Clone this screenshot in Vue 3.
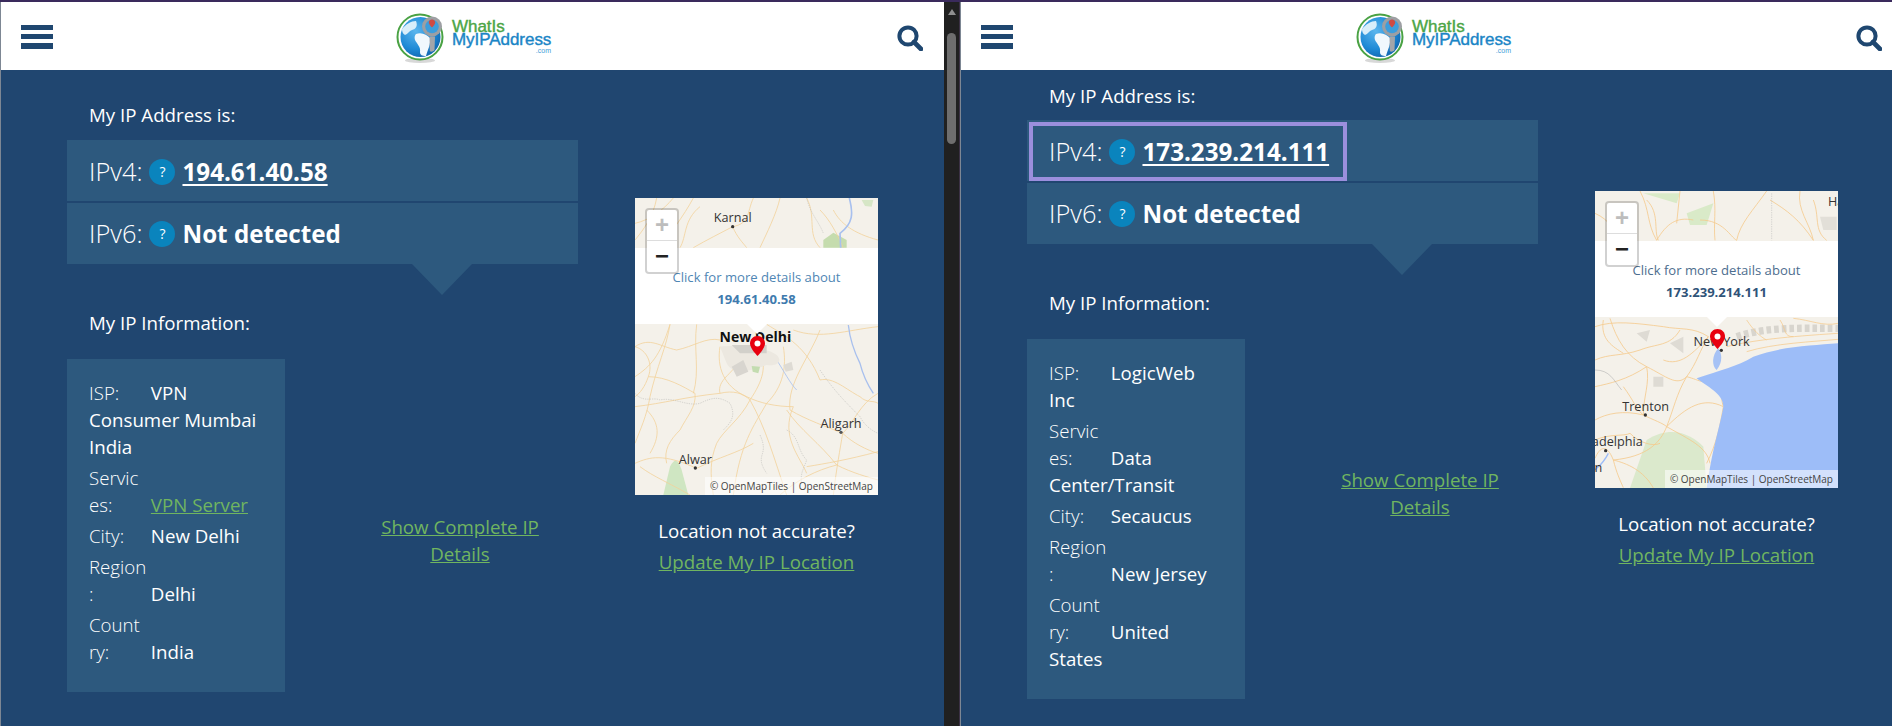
<script setup>
const panes = [
  {
    id: 'left',
    ipv4: '194.61.40.58',
    focused: false,
    info: [
      { label: 'ISP:', value: 'VPN Consumer Mumbai India' },
      { label: 'Servic\nes:', value: 'VPN Server', link: true },
      { label: 'City:', value: 'New Delhi' },
      { label: 'Region\n:', value: 'Delhi' },
      { label: 'Count\nry:', value: 'India' }
    ]
  },
  {
    id: 'right',
    ipv4: '173.239.214.111',
    focused: true,
    info: [
      { label: 'ISP:', value: 'LogicWeb Inc' },
      { label: 'Servic\nes:', value: 'Data Center/Transit' },
      { label: 'City:', value: 'Secaucus' },
      { label: 'Region\n:', value: 'New Jersey' },
      { label: 'Count\nry:', value: 'United States' }
    ]
  }
]

const delhiRoads = [
  'M110 24 C100 80 70 120 45 150', 'M220 24 C190 80 150 130 120 173', 'M338 110 C300 130 260 150 220 173',
  'M338 110 C350 140 370 160 380 173', 'M480 24 C470 70 440 130 420 173', 'M560 24 C590 80 560 130 600 173',
  'M640 60 C660 100 700 130 774 150', 'M45 470 C90 440 120 470 170 480 C220 470 260 440 300 450',
  'M150 403 C140 470 110 530 90 620 C80 680 60 720 45 760', 'M230 403 C220 480 240 540 220 610',
  'M300 470 C290 530 310 590 380 620 C420 640 470 650 520 650', 'M490 470 C500 530 490 590 440 640 C400 710 360 760 340 915',
  'M600 420 C570 500 500 580 510 660 C560 690 620 710 668 730', 'M668 730 C700 700 720 640 774 610',
  'M668 730 C660 780 650 830 640 915', 'M668 730 C700 760 740 780 774 790', 'M45 650 C130 640 200 620 300 610 C340 600 370 610 390 630',
  'M390 630 C440 720 460 800 500 915', 'M520 650 C480 740 540 800 560 850', 'M230 835 C300 800 350 790 400 760',
  'M60 830 C100 860 150 880 210 915', 'M560 830 C620 820 680 810 774 785', 'M520 420 C600 450 680 420 774 410',
  'M300 610 C290 570 340 550 350 520', 'M420 480 C440 530 430 570 390 630',
  'M45 560 C90 530 120 500 150 403', 'M45 470 C80 480 100 520 85 560 C75 590 60 610 45 620',
  'M85 560 C140 560 190 590 225 610', 'M225 610 C230 650 200 680 180 720 C150 750 130 780 140 820',
  'M390 630 C360 690 310 720 290 760 C270 810 270 850 280 915', 'M500 660 C540 720 600 760 650 825',
  'M650 825 C590 840 530 870 480 915', 'M650 825 C700 850 740 860 774 870',
  'M600 570 C640 560 680 600 720 620 C740 640 760 630 774 640', 'M45 820 C90 800 130 790 230 835',
  'M80 660 C120 700 120 740 90 790', 'M440 403 C500 440 560 470 600 570', 'M45 100 C90 90 130 60 160 24',
  'M600 60 C630 90 650 130 670 173', 'M400 24 C380 70 390 100 338 110', 'M180 173 C200 140 190 90 240 50'
]
const delhiBorders = [
  'M45 610 C70 640 100 620 120 630 C160 620 200 650 240 640 C280 620 300 620 330 640 C350 680 330 700 310 720',
  'M420 735 C450 800 400 790 440 850', 'M500 720 C540 740 530 780 560 810 C550 840 540 850 545 880',
  'M600 540 C640 600 680 640 720 680 C730 700 750 720 774 730', 'M560 24 C570 70 600 100 610 130'
]
const yorkRoads = [
  'M180 33 C210 90 200 130 230 181', 'M400 33 C410 90 400 130 405 181', 'M470 181 C480 130 520 90 560 33',
  'M700 60 C720 110 700 150 740 181', 'M230 181 C260 130 290 110 340 120', 'M45 440 C100 420 170 430 250 440 C300 450 340 440 385 470',
  'M90 415 C110 480 140 530 200 560 C260 590 290 620 320 590', 'M200 560 C210 610 190 650 190 705',
  'M320 590 C290 640 280 690 260 740 C240 790 200 830 100 840', 'M260 740 C320 680 370 650 430 680 C420 740 410 790 380 850',
  'M385 470 C360 510 350 550 320 590', 'M45 620 C90 610 140 600 200 560', 'M45 720 C80 700 130 690 190 705 C220 720 250 730 260 740',
  'M45 835 C60 800 80 790 100 840 C110 880 120 900 130 923', 'M150 760 C180 790 220 800 240 790', 'M400 590 C430 620 420 650 430 680',
  'M200 60 C240 100 220 150 235 181', 'M300 33 L290 130', 'M360 120 C430 120 450 170 470 181', 'M570 60 C620 90 660 120 700 181',
  'M660 33 C650 90 690 130 700 181', 'M45 100 C90 120 100 150 120 181', 'M70 420 C60 480 100 500 130 520',
  'M45 540 C90 520 120 530 180 510 C230 490 270 500 300 450', 'M130 620 C160 660 170 690 190 705', 'M250 540 C300 560 340 520 385 470',
  'M320 590 C360 600 380 620 400 590', 'M45 780 C90 760 130 770 150 760', 'M100 840 C140 850 190 870 220 924',
  'M260 740 C330 780 380 800 390 850'
]
const islandRoads = [
  'M440 500 C520 480 620 470 774 460', 'M500 515 C580 490 700 485 774 478',
  'M500 420 C520 450 540 470 560 480', 'M600 420 C620 450 610 470 640 470', 'M640 415 C690 420 730 440 774 430'
]
</script>

<template>
  <div class="screen">
    <template v-for="pane in panes" :key="pane.id">
      <section class="pane" :class="`pane-${pane.id}`">
        <header class="site-header">
          <div class="burger"><i></i><i></i><i></i></div>
          <div class="logo">
            <svg class="globe" viewBox="0 0 52 52" width="52" height="52">
              <defs>
                <radialGradient :id="`sea-${pane.id}`" cx="0.38" cy="0.35" r="0.75">
                  <stop offset="0" stop-color="#5cb6ee" />
                  <stop offset="0.6" stop-color="#1f8ad6" />
                  <stop offset="1" stop-color="#0f5fa8" />
                </radialGradient>
              </defs>
              <ellipse cx="25" cy="49.5" rx="15" ry="2.4" fill="#d8d8d8" />
              <circle cx="25" cy="26" r="22.5" fill="#fff" stroke="#4aa244" stroke-width="2" />
              <circle cx="25.5" cy="26" r="20" :fill="`url(#sea-${pane.id})`" />
              <path d="M7 18 C11 13 16 10 21 10 C23 15 21 18 17 19 C14 20 13 23 10 24 C8 23 7 21 7 18Z" fill="#d9eefa" />
              <path d="M21 23 C27 21 32 24 35 27 C36 33 33 38 31 45 C27 45 25 44 25 41 C26 36 22 33 20 29 C19 26 20 24 21 23Z" fill="#f1f8fd" />
              <circle cx="37" cy="15.5" r="10" fill="#9d9fa3" />
              <circle cx="37" cy="15.5" r="6.8" fill="#3c9ddc" />
              <path d="M37 8.5 C34.8 8.5 33.8 10.2 33.8 11.5 C33.8 13.4 37 16.5 37 16.5 C37 16.5 40.2 13.4 40.2 11.5 C40.2 10.2 39.2 8.5 37 8.5Z" fill="#cf4a43" />
              <path d="M34.5 25.5 H40 L39.5 39 C38 41 35.8 41 34.8 40Z" fill="#a3a5a9" />
            </svg>
            <div class="wordmark">
              <span class="what">WhatIs</span>
              <span class="my">MyIPAddress</span>
              <span class="com">.com</span>
            </div>
          </div>
          <svg class="search" viewBox="0 0 26 26" width="26" height="26">
            <circle cx="11" cy="11" r="8.6" fill="none" stroke="#1f4770" stroke-width="4" />
            <path d="M17 17 L24 24" stroke="#1f4770" stroke-width="4.6" stroke-linecap="round" />
          </svg>
        </header>

        <div class="content">
          <div class="main-col">
            <p class="heading">My IP Address is:</p>
            <div class="ip-panel">
              <div class="ip-row">
                <div class="ip-line" :class="{ focused: pane.focused }">
                  <span class="ip-label">IPv4:</span>
                  <span class="help">?</span>
                  <a class="ip-value underlined">{{ pane.ipv4 }}</a>
                </div>
              </div>
              <div class="ip-row">
                <div class="ip-line">
                  <span class="ip-label">IPv6:</span>
                  <span class="help">?</span>
                  <span class="ip-value">Not detected</span>
                </div>
              </div>
            </div>
            <div class="panel-arrow"></div>
            <p class="heading info-heading">My IP Information:</p>
            <div class="info-row">
              <div class="info-box">
                <div v-for="row in pane.info" :key="row.label" class="info-item">
                  <span class="info-label">{{ row.label }}</span>
                  {{ ' ' }}
                  <a v-if="row.link" class="green-link">{{ row.value }}</a>
                  <span v-else>{{ row.value }}</span>
                </div>
              </div>
              <a class="green-link show-more">Show Complete IP Details</a>
            </div>
          </div>

          <aside class="map-col">
            <div class="map">
              <svg v-if="pane.id === 'left'" class="map-art" viewBox="45 24 729 891">
                <rect x="45" y="24" width="729" height="891" fill="#f4f1ea" />
                <path d="M130 915 L150 830 C165 800 175 810 185 840 L205 915Z" fill="#cfe6c2" />
                <path d="M610 150 L640 128 L680 150 L680 173 L610 173Z" fill="#c5dcae" />
                <path d="M725 30 L760 30 L755 50 L735 48Z" fill="#d6e6c6" />
                <g fill="none" stroke="#f3d29a" stroke-width="2.4"><path v-for="d in delhiRoads" :key="d" :d="d" /></g>
                <g fill="none" stroke="#b9b9b5" stroke-width="1.6" stroke-dasharray="4 3"><path v-for="d in delhiBorders" :key="d" :d="d" /></g>
                <path d="M688 24 C700 70 700 100 660 130 L662 173" fill="none" stroke="#a8c0ee" stroke-width="5" />
                <path d="M685 405 C690 450 700 480 720 520 C730 560 740 580 760 610" fill="none" stroke="#a8c0ee" stroke-width="4" />
                <path d="M470 510 C490 540 510 580 530 600" fill="none" stroke="#b5c9ee" stroke-width="3" />
                <path d="M300 470 C350 465 440 470 470 495 C490 515 470 530 440 525 C400 540 340 560 320 520Z" fill="#ece8e0" />
                <path d="M335 465 H440 V490 H360Z" fill="#d2d0ca" />
                <path d="M335 530 L370 510 L385 545 L350 560Z" fill="#d8d5cf" />
                <path d="M490 525 L515 515 L520 540 L497 545Z" fill="#dedbd4" />
                <path d="M395 528 L420 530 L415 550 L398 545Z" fill="#c3dcb0" />
                <text x="338" y="96" class="city">Karnal</text><circle cx="338" cy="110" r="5" fill="#333" />
                <text x="406" y="457" class="city city-main">New Delhi</text>
                <text x="663" y="713" class="city">Aligarh</text><circle cx="663" cy="727" r="5" fill="#555" />
                <text x="226" y="821" class="city">Alwar</text><circle cx="226" cy="834" r="5" fill="#333" />
              </svg>
              <svg v-else class="map-art" viewBox="45 33 729 891">
                <rect x="45" y="33" width="729" height="891" fill="#f4f1ea" />
                <path d="M320 100 L400 70 L380 135 L330 135Z M190 40 L300 40 L290 70Z" fill="#d9eac8" />
                <path d="M720 110 L770 110 L770 150 L730 150Z" fill="#e2dfd8" />
                <path d="M170 460 L210 450 L200 485Z M270 490 L310 470 L310 520Z M220 590 L250 590 L250 620 L220 620Z" fill="#dedbd4" />
                <path d="M200 780 C280 730 340 770 370 800 L380 924 L150 924Z" fill="#dbe9cc" />
                <g fill="none" stroke="#f5c98a" stroke-width="2.4"><path v-for="d in yorkRoads" :key="d" :d="d" /></g>
                <path d="M470 470 C560 440 660 445 774 445" fill="none" stroke="#d8d5ce" stroke-width="22" stroke-dasharray="14 9" />
                <g fill="none" stroke="#f5c98a" stroke-width="2.2"><path v-for="d in islandRoads" :key="d" :d="d" /></g>
                <path d="M774 490 C700 497 610 497 520 530 C470 560 420 570 350 595 C380 620 430 640 430 680 C420 740 400 790 380 924 L774 924Z" fill="#9dbdf8" />
                <path d="M415 505 C425 520 430 545 410 570 C395 560 395 525 415 505Z" fill="#a6c2f5" />
                <path d="M45 570 C90 570 100 600 125 630" fill="none" stroke="#aaa" stroke-width="1.6" />
                <path d="M575 40 V181" stroke="#bbb" stroke-width="1.6" stroke-dasharray="4 3" />
                <path d="M85 820 C70 850 55 860 45 870" fill="none" stroke="#9dbdf8" stroke-width="4" />
                <text x="425" y="497" class="city">New York</text><circle cx="424" cy="511" r="5" fill="#333" />
                <text x="197" y="692" class="city">Trenton</text><circle cx="196" cy="705" r="5" fill="#333" />
                <text x="188" y="797" class="city end">Philadelphia</text><circle cx="77" cy="812" r="5" fill="#333" />
                <text x="67" y="877" class="city end">Camden</text>
                <text x="744" y="78" class="city start">Hartford</text>
              </svg>

              <div class="zoom-ctl">
                <span class="zoom-btn zoom-plus">+</span>
                <span class="zoom-btn">−</span>
              </div>
              <div class="popup">
                <span class="popup-text">Click for more details about</span>
                <strong class="popup-ip">{{ pane.ipv4 }}</strong>
              </div>
              <svg class="marker" viewBox="0 0 24 32" width="15" height="20">
                <path d="M12 0 C5 0 0 5.5 0 12 C0 20 12 32 12 32 C12 32 24 20 24 12 C24 5.5 19 0 12 0Z" fill="#e8000f" />
                <circle cx="12" cy="12" r="4.8" fill="#fff" />
              </svg>
              <div class="attribution">© OpenMapTiles | OpenStreetMap</div>
            </div>
            <p class="accuracy">Location not accurate?</p>
            <a class="green-link update">Update My IP Location</a>
          </aside>
        </div>
      </section>
      <div v-if="pane.id === 'left'" class="scrollbar">
        <span class="scroll-arrow"></span>
        <span class="scroll-thumb"></span>
      </div>
    </template>
  </div>
</template>

<style scoped>
.screen {
  display: flex;
  width: 1892px;
  height: 726px;
  overflow: hidden;
  background: #204670;
  border-top: 2px solid #3a2a5c;
  box-sizing: border-box;
  font-family: "Open Sans", "Liberation Sans", sans-serif;
  font-size: 18.7px;
  line-height: 27px;
  color: #fff;
}
.pane {
  flex: none;
  height: 724px;
  box-sizing: border-box;
  border-left: 1px solid #7d8794;
  background: #204670;
  overflow: hidden;
}
.pane-left { width: 944px; }
.pane-right { width: 932px; }

.site-header {
  display: flex;
  align-items: center;
  height: 68px;
  background: #fff;
  padding-left: 20px;
}
.pane-left .site-header { padding-right: 21px; }
.pane-right .site-header { padding-right: 10px; }
.burger {
  display: flex;
  flex-direction: column;
  justify-content: space-between;
  width: 32px;
  height: 24px;
  margin-top: 1px;
}
.burger i { display: block; height: 5.5px; background: #1f4770; }
.logo {
  display: flex;
  align-items: flex-start;
  height: 52px;
  margin-left: 342px;
  margin-top: 2px;
  font-family: "Liberation Sans", Arial, sans-serif;
}
.globe { flex: none; }
.wordmark {
  display: flex;
  flex-direction: column;
  width: 99px;
  margin-left: 5px;
  padding-top: 9px;
}
.what, .my { font-size: 17px; -webkit-text-stroke: 0.4px currentColor; letter-spacing: -0.05px; line-height: 13px; white-space: nowrap; }
.what { color: #4ba546; }
.my { color: #1a85c6; }
.com { align-self: flex-end; font-size: 7px; line-height: 8px; color: #3f9ed8; margin-top: 1px; }
.search { margin-left: auto; margin-top: 3px; flex: none; }

.content { display: flex; }
.main-col { width: 568px; margin-left: 66px; flex: none; }
.pane-left .main-col { padding-top: 31px; }
.pane-right .main-col { padding-top: 12px; }
.heading { margin: 0 0 0 22px; }
.ip-panel { margin-top: 12px; width: 511px; display: flex; flex-direction: column; gap: 2px; }
.pane-right .ip-panel { margin-top: 11px; }
.ip-row { height: 61px; background: #2d597e; display: flex; padding: 2px 0 0 2px; box-sizing: border-box; }
.ip-row + .ip-row { padding-top: 0; }
.ip-line {
  display: flex;
  align-items: center;
  padding: 0 18px 0 20px;
  box-sizing: border-box;
}
.ip-line.focused { box-shadow: inset 0 0 0 4px #9b8fdd; }
.ip-label { font-size: 25.4px; font-weight: 300; }
.help {
  width: 26px;
  height: 26px;
  margin: 0 7px 0 7px;
  border-radius: 50%;
  background: #0a84bd;
  color: #fff;
  font-size: 14px;
  line-height: 26px;
  text-align: center;
}
.ip-value { font-size: 24.2px; font-weight: 700; color: #fff; }
.underlined { text-decoration: underline; text-underline-offset: 3px; }
.panel-arrow {
  width: 60px;
  height: 31px;
  margin-left: 345px;
  background: #2d597e;
  clip-path: polygon(0 0, 100% 0, 50% 100%);
}
.info-heading { margin-top: 14px; margin-bottom: 23px; }
.info-row { display: flex; align-items: flex-start; }
.info-box {
  flex: none;
  width: 218px;
  box-sizing: border-box;
  padding: 20px 27px 23px 22px;
  background: #2d597e;
}
.info-item { margin-bottom: 4px; }
.info-label {
  display: inline-block;
  width: 57px;
  white-space: pre;
  font-weight: 300;
}
.green-link { color: #70b560; text-decoration: underline; }
.show-more {
  flex: 1;
  padding: 0 80px;
  text-align: center;
}
.pane-left .show-more { margin-top: 154px; }
.pane-right .show-more { margin-top: 127px; }

.map-col { width: 243px; flex: none; text-align: center; }
.pane-left .map-col { margin-top: 128px; }
.pane-right .map-col { margin-top: 121px; }
.map { position: relative; height: 297px; overflow: hidden; }
.map-art { display: block; width: 243px; height: 297px; }
.city { font-family: "Open Sans", sans-serif; font-size: 38px; fill: #333; text-anchor: middle; }
.city-main { font-size: 42px; font-weight: 700; fill: #111; }
.start { text-anchor: start; }
.end { text-anchor: end; }
.zoom-ctl {
  position: absolute;
  z-index: 3;
  left: 10px;
  top: 10px;
  width: 30px;
  display: flex;
  flex-direction: column;
  border: 2px solid rgba(0, 0, 0, 0.18);
  border-radius: 4px;
  background: #fff;
  background-clip: padding-box;
}
.zoom-btn {
  height: 31px;
  box-sizing: border-box;
  font: 700 24px/30px "Liberation Sans", sans-serif;
  color: #222;
}
.zoom-plus { color: #bdbdbd; border-bottom: 1px solid #ddd; }
.popup {
  position: absolute;
  z-index: 2;
  left: 0;
  right: 0;
  top: 50px;
  height: 76px;
  background: #fff;
  display: flex;
  flex-direction: column;
  align-items: center;
  padding-top: 18px;
  box-sizing: border-box;
  font-size: 13.1px;
  line-height: 22px;
}
.popup::after {
  content: "";
  position: absolute;
  left: 112px;
  top: 76px;
  border: 10px solid transparent;
  border-top: 10px solid #fff;
  border-bottom: 0;
}
.pane-left .popup-text { color: #4f86b4; }
.pane-left .popup-ip { color: #3f7bae; }
.pane-right .popup-text { color: #4d6d8e; }
.pane-right .popup-ip { color: #2f5378; }
.marker { position: absolute; z-index: 2; left: 115px; top: 138px; }
.attribution {
  position: absolute;
  right: 0;
  bottom: 0;
  padding: 0 5px;
  font-size: 10px;
  line-height: 18px;
  color: #444;
  background: rgba(255, 255, 255, 0.55);
}
.accuracy { margin: 22px 0 4px; }
.update { display: block; }

.scrollbar {
  flex: none;
  width: 16px;
  height: 724px;
  box-sizing: border-box;
  background: #202020;
  border-right: 1px solid #3b3144;
  display: flex;
  flex-direction: column;
  align-items: center;
}
.scroll-arrow {
  margin-top: 7px;
  border: 4.5px solid transparent;
  border-bottom: 6px solid #8f8f8f;
  border-top: 0;
}
.scroll-thumb { width: 9px; height: 111px; margin-top: 18px; border-radius: 5px; background: #6e6e6e; }
</style>

<style>
html, body { margin: 0; background: #204670; }
</style>
